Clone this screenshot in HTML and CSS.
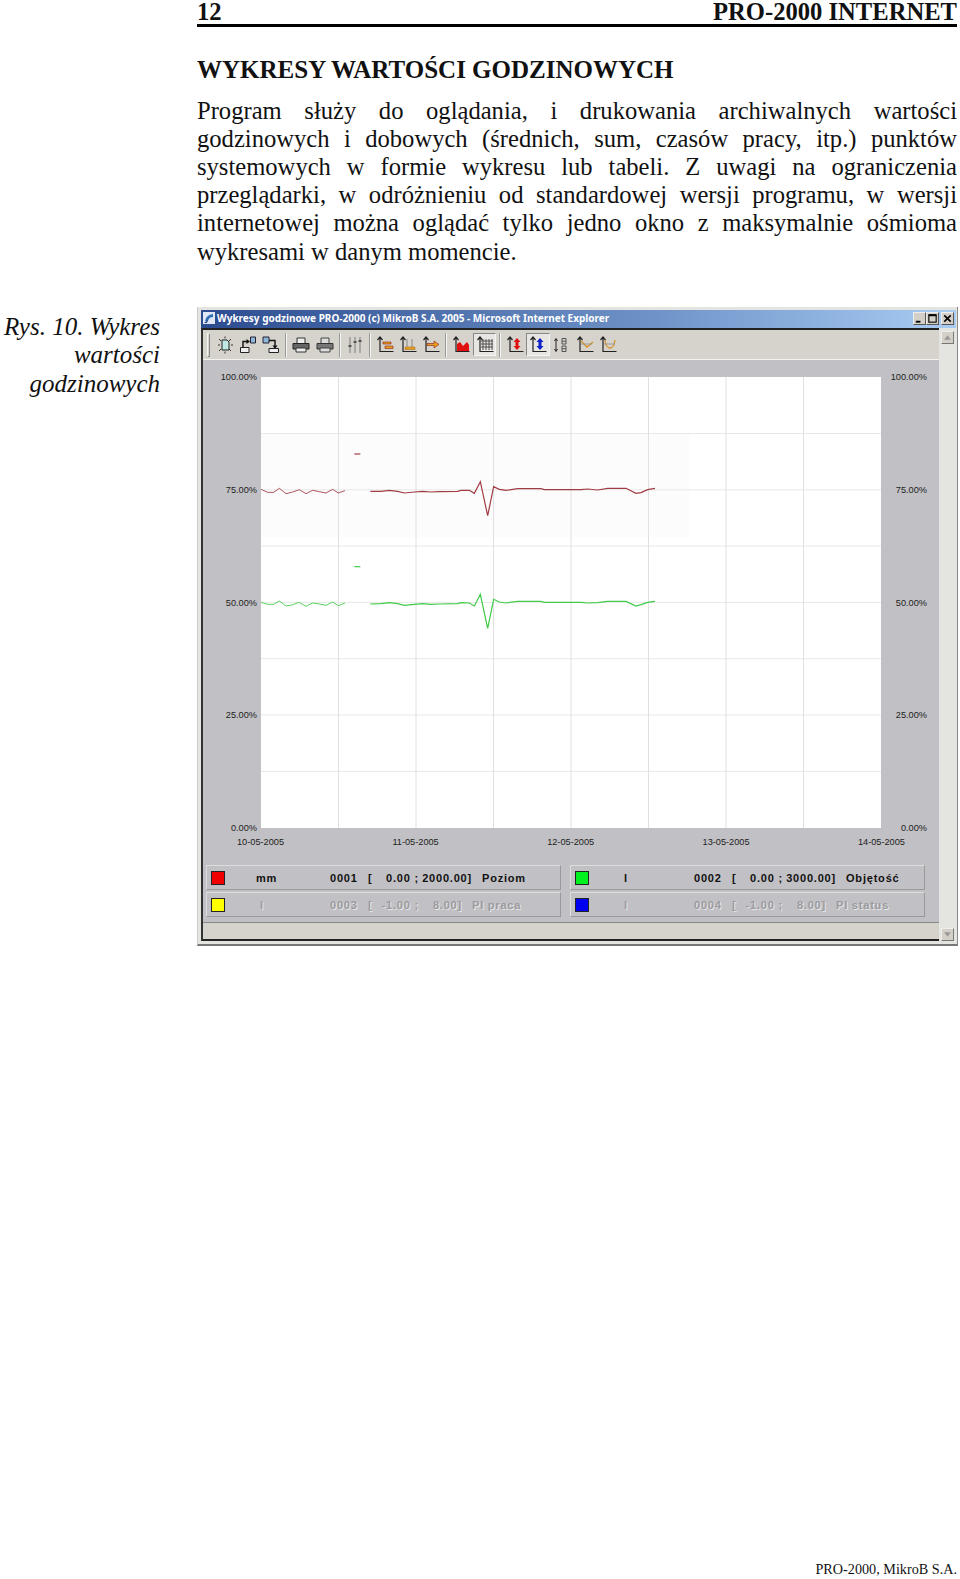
FILE: index.html
```html
<!DOCTYPE html>
<html lang="pl">

<head>
    <meta charset="UTF-8">
    <title>PRO-2000 INTERNET</title>
    <link rel="stylesheet" href="styles.css">
</head>

<body>

    <!-- page header -->
    <div class="head">
        <span>12</span>
        <span>PRO-2000 INTERNET</span>
    </div>

    <h1 class="title">WYKRESY WARTOŚCI GODZINOWYCH</h1>

    <p class="text">Program służy do oglądania, i drukowania archiwalnych wartości godzinowych i dobowych (średnich, sum, czasów pracy, itp.) punktów systemowych w formie wykresu lub tabeli. Z uwagi na ograniczenia przeglądarki, w odróżnieniu od standardowej wersji programu, w wersji internetowej można oglądać tylko jedno okno z maksymalnie ośmioma wykresami w danym momencie.</p>

    <div class="figure">
        <div class="caption">Rys. 10. Wykres wartości godzinowych</div>

        <!-- screenshot of the browser window -->
        <div class="window">
            <div class="titlebar">
                <svg class="ie" viewBox="0 0 14 14"><rect x="1" y="1" width="12" height="12" fill="#dfe8f4"/><path d="M3 10 Q4 4 11 3 L11 6 Q7 6 6 10 Z" fill="#2f6fb8"/><path d="M2 12 L6 9 L5 12 Z" fill="#1d3d78"/></svg>
                <span class="titletext">Wykresy godzinowe PRO-2000 (c) MikroB S.A. 2005 - Microsoft Internet Explorer</span>
                <div class="winbtns">
                    <span class="winbtn"><svg viewBox="0 0 12 12"><path d="M2 9.500H7" stroke="#000" stroke-width="2"/></svg></span>
                    <span class="winbtn"><svg viewBox="0 0 12 12"><rect x="2" y="2" width="8" height="8" fill="none" stroke="#000" stroke-width="1.200"/><path d="M2 2.500H10" stroke="#000" stroke-width="2"/></svg></span>
                    <span class="winbtn close"><svg viewBox="0 0 12 12"><path d="M2.500 2.500L9.500 9.500M9.500 2.500L2.500 9.500" stroke="#000" stroke-width="1.800"/></svg></span>
                </div>
            </div>

            <div class="client">
                <div class="main">

                    <div class="toolbar">
                        <span class="grip"></span>

                        <span class="tool"><svg viewBox="0 0 18 18"><path d="M6 4H11L13 6V14H6Z" fill="#bfe8e4" stroke="#222"/><path d="M9 0.500V2.500M9 15.500V17.500M2 9H4M15 9H17M3 3L5 5M15 3L13 5M3 15L5 13M15 15L13 13" stroke="#333"/></svg></span>
                        <span class="tool"><svg viewBox="0 0 18 18"><path d="M1.500 16.500V11.500H10V16.500Z" fill="#eee" stroke="#222"/><path d="M4 11V5.500H8" stroke="#111" stroke-width="1.400" fill="none"/><path d="M7.500 3L11 5.500L7.500 8Z" fill="#111"/><path d="M11.500 1H16.500V7H11.500Z" fill="#8fb8d8" stroke="#223"/></svg></span>
                        <span class="tool"><svg viewBox="0 0 18 18"><path d="M1 1H7V7H1Z" fill="#8fb8d8" stroke="#223"/><path d="M7 4.500H13V10" stroke="#111" stroke-width="1.400" fill="none"/><path d="M10.500 9.500L13 13L15.500 9.500Z" fill="#111"/><path d="M7 16.500V12.500H16.500V16.500Z" fill="#eee" stroke="#222"/></svg></span>
                        <span class="sep"></span>

                        <span class="tool"><svg viewBox="0 0 18 18"><path d="M5 7V2H13V7" fill="#eee" stroke="#333"/><path d="M1 7.500H17V13H1Z" fill="#666" stroke="#222"/><path d="M4 12H14V16H4Z" fill="#eee" stroke="#333"/></svg></span>
                        <span class="tool"><svg viewBox="0 0 18 18"><path d="M5 7V2H13V7" fill="#ddd" stroke="#444"/><path d="M1 7.500H17V13H1Z" fill="#777" stroke="#333"/><path d="M4 12H14V16H4Z" fill="#ddd" stroke="#444"/></svg></span>
                        <span class="sep"></span>

                        <span class="tool"><svg viewBox="0 0 18 18"><path d="M4 1V17M9 1V17M14 1V17" stroke="#8a8a8a" stroke-width="1.200"/><path d="M2.500 10H5.500M7.500 6H10.500M12.500 5H15.500" stroke="#555" stroke-width="2"/></svg></span>
                        <span class="sep"></span>

                        <span class="tool"><svg viewBox="0 0 18 18"><path d="M1.500 4L4 1L6.500 4M4 2V15.500H17.500" class="axis"/><path d="M7 6H15V8H7ZM9 10H17V12.500H9Z" fill="#e8a020" stroke="#8a1a10" stroke-width=".6"/></svg></span>
                        <span class="tool"><svg viewBox="0 0 18 18"><path d="M1.500 4L4 1L6.500 4M4 2V15.500H17.500" class="axis"/><path d="M8 3V14M13 3V14" stroke="#888"/><path d="M6 11H16V13.500H6Z" fill="#e8a020" stroke="#a06010" stroke-width=".5"/></svg></span>
                        <span class="tool"><svg viewBox="0 0 18 18"><path d="M1.500 4L4 1L6.500 4M4 2V15.500H17.500" class="axis"/><path d="M5 7.500H12V5L17 8.500L12 12V9.500H5Z" fill="#e8a020" stroke="#8a1a10" stroke-width=".6"/></svg></span>
                        <span class="sep"></span>

                        <span class="tool"><svg viewBox="0 0 18 18"><path d="M1.500 4L4 1L6.500 4M4 2V15.500H17.500" class="axis"/><path d="M5 15V8L8 6L11 10L15 6L17 9V15Z" fill="#e01010"/></svg></span>
                        <span class="tool on"><svg viewBox="0 0 18 18"><path d="M1.500 4L4 1L6.500 4M4 2V15.500H17.500" class="axis"/><path d="M7 3V14M10 3V14M13 3V14M16 3V14M5 5H17M5 8H17M5 11H17" stroke="#444" stroke-width=".9"/></svg></span>
                        <span class="sep"></span>

                        <span class="tool"><svg viewBox="0 0 18 18"><path d="M1.500 4L4 1L6.500 4M4 2V15.500H17.500" class="axis"/><path d="M11 2L14.500 6H12.500V10H14.500L11 14L7.500 10H9.500V6H7.500Z" fill="#e01010"/></svg></span>
                        <span class="tool on"><svg viewBox="0 0 18 18"><path d="M1.500 4L4 1L6.500 4M4 2V15.500H17.500" class="axis"/><path d="M11 2L14.500 6H12.500V10H14.500L11 14L7.500 10H9.500V6H7.500Z" fill="#1020c8"/></svg></span>
                        <span class="tool"><svg viewBox="0 0 18 18"><path d="M4 3V15M2.500 5L4 2.500L5.500 5M2.500 13L4 15.500L5.500 13" stroke="#222" fill="none"/><path d="M10 2.500H14V8H10ZM10 10H14V15.500H10ZM10 5.200H14M10 12.700H14" stroke="#555" fill="none"/></svg></span>
                        <span class="tool"><svg viewBox="0 0 18 18"><path d="M1.500 4L4 1L6.500 4M4 2V15.500H17.500" class="axis"/><path d="M5 5L11 11L17 6" stroke="#d89020" stroke-width="1.300" fill="none"/><path d="M5 8H16" stroke="#999"/></svg></span>
                        <span class="tool"><svg viewBox="0 0 18 18"><path d="M1.500 4L4 1L6.500 4M4 2V15.500H17.500" class="axis"/><path d="M6 4Q7 12 11 12T16 4" stroke="#d89020" stroke-width="1.300" fill="none"/><path d="M5 8H16" stroke="#999"/></svg></span>
                    </div>

                    <div class="chart">
                        <div class="plotrow">
                            <div class="yaxis left">
                                <span>100.00%</span><span>75.00%</span><span>50.00%</span><span>25.00%</span><span>0.00%</span>
                            </div>

                            <div class="plot">
                                <svg viewBox="0 0 620 451">
                                    <rect x="0" y="57" width="428" height="103" fill="#fcfcfc"/>
                                    <path class="gridy" d="M0 56.500H620M0 112.800H620M0 169.100H620M0 225.400H620M0 281.700H620M0 338H620M0 394.300H620"/>
                                    <path class="gridx" d="M77.500 0V451M155 0V451M232.500 0V451M310 0V451M387.500 0V451M465 0V451M542.500 0V451"/>

                                    <g transform="translate(-10 54) scale(.33333)">
                                        <path class="red" d="M310 69H328"/>
                                        <polyline class="red thin" points="30,175 50,184 68,184 85,172 105,188 125,183 145,176 165,188 185,178 205,182 225,186 245,175 262,186 282,179"/>
                                        <polyline class="red" points="358,181 390,181 415,178 440,181 460,186 490,183 515,181 540,183 565,182 620,181 630,178 655,178 670,187 688,152 710,254 728,167 745,175 765,178 800,173 870,173 880,176 990,176 1010,174 1040,177 1070,172 1125,172 1155,187 1170,185 1190,176 1212,172"/>

                                        <path class="green" d="M310 407H328"/>
                                        <polyline class="green thin" points="30,514 50,520 68,520 85,510 105,525 125,521 145,514 165,526 185,516 205,519 225,523 245,513 262,524 282,516"/>
                                        <polyline class="green" points="358,519 390,518 415,515 440,518 460,523 490,520 515,518 540,520 565,519 620,518 630,515 655,516 670,525 688,490 710,592 728,505 745,513 765,516 800,511 870,511 880,514 990,514 1010,516 1040,515 1070,511 1125,511 1155,525 1170,521 1190,514 1212,511"/>
                                    </g>
                                </svg>
                            </div>

                            <div class="yaxis right">
                                <span>100.00%</span><span>75.00%</span><span>50.00%</span><span>25.00%</span><span>0.00%</span>
                            </div>
                        </div>

                        <div class="xaxis">
                            <span>10-05-2005</span><span>11-05-2005</span><span>12-05-2005</span><span>13-05-2005</span><span>14-05-2005</span>
                        </div>

                        <div class="legend">
                            <div class="item">
                                <span class="swatch" style="background-color: #f00000"></span>
                                <span class="unit">mm</span><span class="id">0001</span><span class="br">[</span><span class="lo">0.00 ;</span><span class="hi">2000.00]</span><span class="name">Poziom</span>
                            </div>
                            <div class="item">
                                <span class="swatch" style="background-color: #00f020"></span>
                                <span class="unit l">l</span><span class="id">0002</span><span class="br">[</span><span class="lo">0.00 ;</span><span class="hi">3000.00]</span><span class="name">Objętość</span>
                            </div>
                            <div class="item off">
                                <span class="swatch" style="background-color: #ffff00"></span>
                                <span class="unit l">l</span><span class="id">0003</span><span class="br">[</span><span class="lo">-1.00 ;</span><span class="hi">8.00]</span><span class="name">PI praca</span>
                            </div>
                            <div class="item off">
                                <span class="swatch" style="background-color: #0000f0"></span>
                                <span class="unit l">l</span><span class="id">0004</span><span class="br">[</span><span class="lo">-1.00 ;</span><span class="hi">8.00]</span><span class="name">PI status</span>
                            </div>
                        </div>
                    </div>

                    <div class="statusbar"></div>
                </div>

                <div class="scrollbar">
                    <span class="arrow"><svg viewBox="0 0 10 10"><path d="M2 7H8L5 3Z" fill="#999"/></svg></span>
                    <span class="arrow"><svg viewBox="0 0 10 10"><path d="M2 3H8L5 7Z" fill="#999"/></svg></span>
                </div>
            </div>
        </div>
    </div>

    <div class="foot">PRO-2000, MikroB S.A.</div>

</body>

</html>
```

FILE: styles.css
```css
* {
    margin: 0;
    padding: 0;
    box-sizing: border-box;
}

html,
body {
    width: 100%;
    height: 100%;
}

body {
    display: flex;
    flex-direction: column;
    padding-right: 3px;
    background-color: white;
    color: #111;
    font-family: "Liberation Serif", serif;
    font-size: 24.600px;
    overflow: hidden;
}

.head {
    display: flex;
    justify-content: space-between;
    height: 27px;
    margin-left: 197px;
    border-bottom: 3px solid black;
    font-weight: bold;
    line-height: 24px;
}

.title {
    margin: 28px 0 0 197px;
    font-size: 25px;
    line-height: 30px;
}

.text {
    margin: 11.500px 0 0 197px;
    line-height: 28.200px;
    text-align: justify;
}

.figure {
    display: flex;
    margin: 41.500px -1px 0 0;
}

.caption {
    flex-shrink: 0;
    width: 160px;
    margin: 6px 37px 0 0;
    font-size: 25px;
    font-style: italic;
    line-height: 28.200px;
    text-align: right;
}

/* window */

.window {
    display: flex;
    flex-direction: column;
    flex-shrink: 0;
    width: 761px;
    height: 639px;
    padding: 3px 1px 3px 3px;
    background-color: #e4e4e0;
    border-right: 1px solid #888;
    border-bottom: 2px solid #777;
    border-left: 1px solid #ccc;
    font-family: "Liberation Sans", sans-serif;
}

.titlebar {
    display: flex;
    align-items: center;
    height: 18px;
    flex-shrink: 0;
    padding-bottom: 2px;
    background: linear-gradient(to right, #2c4c90, #6f93c8 60%, #a8ccf2);
    color: white;
}

.ie {
    width: 14px;
    height: 14px;
    margin: 0 1px 0 1px;
}

.titletext {
    font-family: "Noto Sans", sans-serif;
    font-size: 10px;
    font-weight: bold;
    white-space: nowrap;
}

.winbtns {
    display: flex;
    margin-left: auto;
    margin-right: 2px;
}

.winbtn {
    display: flex;
    width: 13px;
    height: 13px;
    background-color: #d4d0c8;
    border: 1px solid;
    border-color: #eee #555 #555 #eee;
}

.winbtn.close {
    margin-left: 2px;
}

.winbtn svg {
    width: 100%;
    height: 100%;
}

.client {
    display: flex;
    flex: 1;
    min-height: 0;
}

.main {
    display: flex;
    flex-direction: column;
    flex: 1;
    min-width: 0;
    border-top: 2px solid #222;
    border-bottom: 2px solid #222;
    border-left: 2px solid #333;
}

/* toolbar */

.toolbar {
    display: flex;
    align-items: center;
    height: 30px;
    flex-shrink: 0;
    padding-left: 4px;
    background-color: #d6d3cd;
    border-bottom: 1px solid #f2f2f0;
}

.grip {
    width: 3px;
    height: 24px;
    margin-right: 3px;
    background-color: #d6d3cd;
    border: 1px solid;
    border-color: #f4f4f4 #888 #888 #f4f4f4;
}

.tool {
    display: flex;
    align-items: center;
    justify-content: center;
    width: 23.300px;
    height: 23px;
}

.tool svg {
    width: 18px;
    height: 18px;
    fill: none;
}

.tool.on {
    background-color: #e8e6e2;
    border: 1px solid;
    border-color: #888 #f4f4f4 #f4f4f4 #888;
}

.axis {
    fill: none;
    stroke: #222;
    stroke-width: 1.200;
}

.sep {
    width: 2px;
    height: 24px;
    margin: 0 2.400px;
    border-left: 1px solid #999;
    border-right: 1px solid #f4f4f4;
}

/* chart */

.chart {
    display: flex;
    flex-direction: column;
    flex: 1;
    padding: 11px 0 0 5px;
    background-color: #c1c0c4;
}

.plotrow {
    display: flex;
}

.yaxis {
    display: flex;
    flex-direction: column;
    justify-content: space-between;
    width: 53px;
    height: 463px;
    font-size: 9.200px;
    line-height: 12px;
    color: #222;
}

.yaxis.left {
    text-align: right;
    padding-right: 4px;
}

.yaxis.right {
    text-align: right;
    padding-right: 7px;
    width: 53px;
}

.plot {
    width: 620px;
    height: 451px;
    margin-top: 6px;
    background-color: white;
}

.plot svg {
    display: block;
    width: 100%;
    height: 100%;
}

.gridy {
    stroke: #e8e8e8;
    stroke-width: 1;
    fill: none;
}

.gridx {
    stroke: #e0e0e0;
    stroke-width: 1;
    fill: none;
}

.red,
.green {
    fill: none;
    stroke-width: 3.600;
}

.thin {
    stroke-width: 2.600;
}

.red {
    stroke: #a03c44;
}

.green {
    stroke: #40cc48;
}

.xaxis {
    display: flex;
    justify-content: space-between;
    width: 668px;
    margin: 2px 0 0 29px;
    font-size: 9.200px;
    line-height: 12px;
    color: #222;
}

.legend {
    display: grid;
    grid-template-columns: 355px 355px;
    column-gap: 9px;
    row-gap: 2px;
    margin: 17px 0 0 -2px;
}

.item {
    display: flex;
    align-items: center;
    height: 25px;
    padding-left: 4px;
    border: 1px solid;
    border-color: #ddd #999 #999 #ddd;
    font-size: 11px;
    font-weight: bold;
    letter-spacing: .8px;
    white-space: pre;
}

.swatch {
    width: 14px;
    height: 14px;
    margin-right: 31px;
    border: 1px solid #222;
}

.unit {
    width: 74px;
}

.unit.l {
    padding-left: 4px;
}

.id {
    width: 38px;
}

.br {
    width: 12px;
}

.lo {
    width: 39px;
    text-align: right;
}

.hi {
    width: 53px;
    text-align: right;
}

.name {
    margin-left: 10px;
}

.off {
    color: #9b9a9e;
    text-shadow: 1px 1px 0 #e6e6e6;
}

.off .hi {
    width: 43px;
}

.statusbar {
    height: 17px;
    flex-shrink: 0;
    background-color: #d6d3cd;
    border-top: 1px solid #888;
}

/* scrollbar */

.scrollbar {
    display: flex;
    flex-direction: column;
    justify-content: space-between;
    width: 17px;
    padding-top: 3px;
    padding-left: 2px;
}

.arrow {
    display: flex;
    width: 13px;
    height: 13px;
    background-color: #d4d0c8;
    border: 1px solid;
    border-color: #eee #777 #777 #eee;
}

.arrow svg {
    width: 100%;
    height: 100%;
}

/* footer */

.foot {
    margin-top: auto;
    padding-bottom: 2px;
    font-size: 14.200px;
    line-height: 16px;
    text-align: right;
}
```
